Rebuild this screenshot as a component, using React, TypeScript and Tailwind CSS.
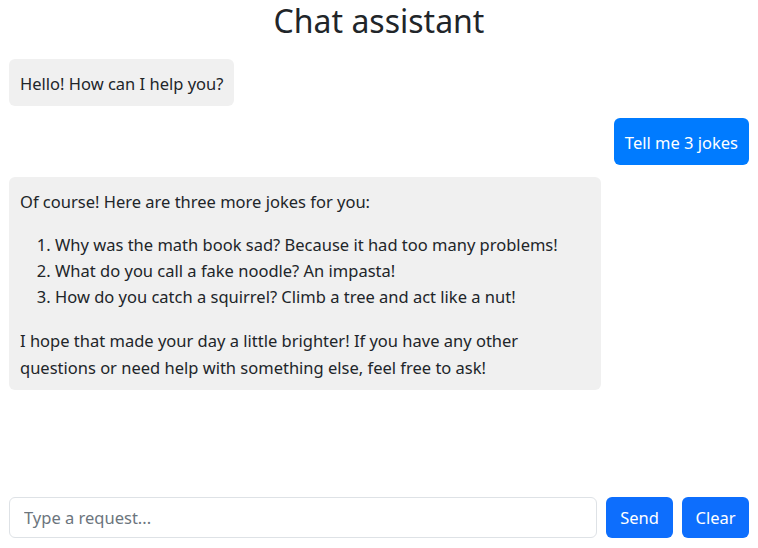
import React from 'react';

type Msg = { role: 'user' | 'assistant'; content: React.ReactNode };

const messages: Msg[] = [
  { role: 'assistant', content: <p>Hello! How can I help you?</p> },
  { role: 'user', content: <p>Tell me 3 jokes</p> },
  {
    role: 'assistant',
    content: (
      <>
        <p className="mb-[17px]">Of course! Here are three more jokes for you:</p>
        <ol className="list-decimal pl-[35px] mb-[18px]">
          <li>Why was the math book sad? Because it had too many problems!</li>
          <li>What do you call a fake noodle? An impasta!</li>
          <li>How do you catch a squirrel? Climb a tree and act like a nut!</li>
        </ol>
        <p className="leading-[26.5px]">
          I hope that made your day a little brighter! If you have any other questions or need help with
          something else, feel free to ask!
        </p>
      </>
    ),
  },
];

const App: React.FC = () => {
  return (
    <div
      className="h-screen flex flex-col px-[9px] pb-[10px] text-[#212529] bg-white text-[16.5px] leading-[26px]"
      style={{ fontFamily: '"Noto Sans", "Open Sans", sans-serif' }}
    >
      <h1 className="text-center text-[32px] leading-[42px] font-normal mb-[17px]">Chat assistant</h1>

      <div className="flex-1 flex flex-col gap-3">
        {messages.map((m, i) =>
          m.role === 'user' ? (
            <div key={i} className="self-end bg-[#007bff] text-white rounded-md px-[11px] pt-[12px] pb-[9px]">
              {m.content}
            </div>
          ) : (
            <div key={i} className="self-start max-w-[80%] bg-[#f0f0f0] rounded-md px-[11px] pt-[12px] pb-[9px]">
              {m.content}
            </div>
          )
        )}
      </div>

      <div className="flex items-stretch gap-[9px]">
        <input
          type="text"
          placeholder="Type a request..."
          className="flex-1 h-[41px] border border-[#dee2e6] rounded-md px-[14px] placeholder:text-[#6c757d] outline-none"
        />
        <button className="w-[67px] h-[41px] bg-[#0d6efd] text-white rounded-md">Send</button>
        <button className="w-[67px] h-[41px] bg-[#0d6efd] text-white rounded-md">Clear</button>
      </div>
    </div>
  );
};

export default App;
